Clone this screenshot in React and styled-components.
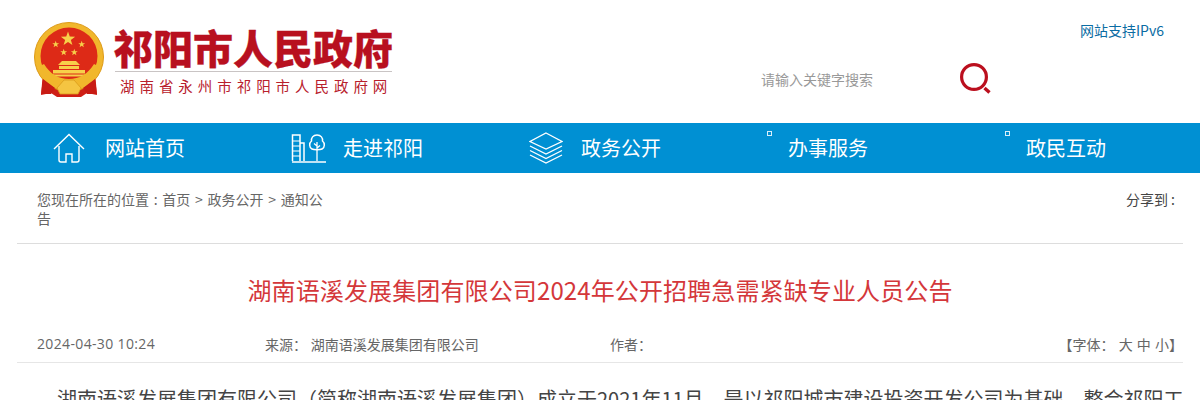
import React from "react";
import styled, { createGlobalStyle } from "styled-components";

const Global = createGlobalStyle`
  html, body { margin: 0; padding: 0; background: #fff; overflow: hidden; }
  body { font-family: "Noto Sans", "Noto Sans CJK SC", sans-serif; color: #666; }
`;
const CJK = `"Noto Sans CJK SC", sans-serif`;
const Page = styled.div`width: 1200px; height: 400px; overflow: hidden;`;
const Header = styled.header`height: 123px; display: flex; justify-content: space-between; padding: 0 36px 0 33px; box-sizing: border-box;`;
const Brand = styled.a`display: flex; align-items: flex-start; padding-top: 22px; gap: 9px; text-decoration: none;`;
const BrandText = styled.div`display: flex; flex-direction: column; padding-top: 1px;`;
const SiteName = styled.div`font: 900 40px/48px ${CJK}; color: #b8101f; width: 280px; margin-left: -1px; white-space: nowrap; -webkit-text-stroke: 0.3px #b8101f;`;
const SubName = styled.div`margin-left: 1px; padding: 3px 0 0 5px; width: 272px; border-top: 1px solid #c9c4c4; font: 400 14.5px/22px ${CJK}; letter-spacing: 4.95px; color: #b8202c; white-space: nowrap;`;
const Tools = styled.div`display: flex; flex-direction: column; align-items: flex-end; width: 404px;`;
const Ipv6 = styled.a`margin-top: 20px; font: 400 14px/20px ${CJK}; color: #0b6ca3;`;
const Search = styled.div`margin-top: 23px; width: 404px; display: flex; align-items: center; height: 32px;`;
const Placeholder = styled.span`font: 400 14px/20px ${CJK}; color: #999; width: 198px; padding-left: 1px;`;
const Nav = styled.nav`height: 50px; background: #0090d3; display: grid; grid-template-columns: repeat(5, 238px); padding-left: 53px;`;
const NavItem = styled.a`display: flex; align-items: center; color: #fff; font: 400 20px/50px ${CJK}; white-space: nowrap;`;
const NavIcon = styled.span`display: flex; width: ${p => p.$w}px; margin-right: ${p => p.$gap}px;`;
const Broken = styled.i`width: 3px; height: 3px; border: 1px solid #d7eefa; align-self: flex-start; margin: 8px 16px 0 0; flex: none;`;
const Crumbs = styled.div`display: flex; justify-content: space-between; align-items: flex-start; margin: 0 17px; padding: 17px 8px 15px 20px; height: 38px; border-bottom: 1px solid #ddd; font: 400 14px/19px ${CJK}; color: #666;`;
const Trail = styled.div`width: 295px; word-spacing: 1.6px;`;
const Share = styled.div`color: #444;`;
const Title = styled.h1`margin: 0; padding-top: 29px; height: 54px; font: 400 24px/34px ${CJK}; color: #d4373a; text-align: center; letter-spacing: 0.12px;`;
const Meta = styled.div`margin: 0 17px; padding: 0 0 2px 20px; height: 33px; display: flex; align-items: center; border-bottom: 1px solid #e6e6e6; font: 400 14px/20px ${CJK}; color: #666; white-space: nowrap;`;
const Date = styled.span`width: 228px; font-family: "Open Sans", sans-serif; letter-spacing: 0.35px;`;
const Source = styled.span`width: 345px; word-spacing: 0.5px;`;
const Author = styled.span`flex: 1;`;
const FontSize = styled.span`word-spacing: 1px;`;
const Body = styled.p`margin: 19px 15px 0 17px; text-indent: 2em; font: 400 20px/34px ${CJK}; color: #444;`;

const Star = ({ x, y, r }) => {
  const pts = [];
  for (let i = 0; i < 10; i++) {
    const a = -Math.PI / 2 + (i * Math.PI) / 5;
    const d = i % 2 ? r * 0.4 : r;
    pts.push(`${(x + d * Math.cos(a)).toFixed(2)},${(y + d * Math.sin(a)).toFixed(2)}`);
  }
  return <polygon points={pts.join(" ")} />;
};

const Emblem = () => (
  <svg width="72" height="76" viewBox="0 0 72 76">
    <path d="M10 50 L8 73 L18 71 L24 75 L48 75 L54 71 L64 73 L62 50 Z" fill="#cf1f16" />
    <circle cx="36" cy="35" r="34.5" fill="#f1b72c" stroke="#dd9a17" strokeWidth="1" />
    <circle cx="36" cy="34" r="28.5" fill="#dd2a17" />
    <g fill="#f7d04a">
      <Star x={35} y={17} r={7.5} />
      <Star x={22.7} y={22.3} r={3.6} />
      <Star x={48.7} y={22.3} r={3.6} />
      <Star x={30.7} y={30.3} r={3.6} />
      <Star x={41.3} y={30.3} r={3.6} />
      <path d="M29 39 H43 L47 43 H25 Z" />
      <rect x="26" y="44" width="20" height="3" />
      <rect x="20" y="48" width="32" height="3.5" />
      <rect x="16" y="52.5" width="40" height="2" />
    </g>
    <path d="M7 44 C13 58 24 63 36 63 C48 63 59 58 65 44 L61 42 C55 52 46 57 36 57 C26 57 17 52 11 42 Z" fill="#f1b72c" />
    <path d="M24 66 L31 58 H41 L48 66 L45 72 H27 Z" fill="#f5c542" stroke="#d99a1a" strokeWidth="0.8" />
    <path d="M10 57 L22 66 L18 72 L8 72 Z M62 57 L50 66 L54 72 L64 72 Z" fill="#c81b14" />
  </svg>
);
const HomeIcon = () => (
  <svg width="32" height="30" viewBox="0 0 32 30" fill="none" stroke="#fff" strokeWidth="1.4">
    <path d="M1 16 L16 1.5 L31 16" />
    <path d="M6 13 V27 Q6 29 8 29 H13 V21 H19 V29 H24 Q26 29 26 27 V13" />
  </svg>
);
const CityIcon = () => (
  <svg width="35" height="30" viewBox="0 0 35 30" fill="none" stroke="#fff" strokeWidth="1.5">
    <path d="M1.5 28 V2 H9 V28" />
    <path d="M13 28 V10 H9" />
    <path d="M1.5 8 H9 M1.5 13 H9 M1.5 18 H9 M1.5 23 H9" strokeWidth="1.2" />
    <path d="M26 2 C22 2 20 5 20.5 8 C18 10 18 14.5 21 16 C23 17 29 17 31 16 C34 14.5 34 10 31.5 8 C32 5 30 2 26 2 Z" />
    <path d="M26 9 V28 M26 13 L23 10.5 M26 15 L29 12.5" strokeWidth="1.3" />
    <path d="M1 29 H35" strokeWidth="1.6" />
  </svg>
);
const LayersIcon = () => (
  <svg width="34" height="32" viewBox="0 0 34 32" fill="none" stroke="#fff" strokeWidth="1.3">
    <path d="M17 1 L33 9.5 L17 17 L1 9.5 Z" />
    <path d="M1 14 L17 22 L33 14" />
    <path d="M1 18.5 L17 26.5 L33 18.5" />
    <path d="M1 23 L17 31 L33 23" />
  </svg>
);
const SearchIcon = () => (
  <svg width="32" height="32" viewBox="0 0 32 32" fill="none" stroke="#bb0f1e">
    <circle cx="15" cy="14" r="12.4" strokeWidth="3.2" />
    <path d="M25.5 25 L30.5 29.5" strokeWidth="3.4" />
  </svg>
);

export default function App() {
  return (
    <Page>
      <Global />
      <Header>
        <Brand>
          <Emblem />
          <BrandText>
            <SiteName>祁阳市人民政府</SiteName>
            <SubName>湖南省永州市祁阳市人民政府网</SubName>
          </BrandText>
        </Brand>
        <Tools>
          <Ipv6>网站支持IPv6</Ipv6>
          <Search>
            <Placeholder>请输入关键字搜索</Placeholder>
            <SearchIcon />
          </Search>
        </Tools>
      </Header>
      <Nav>
        <NavItem><NavIcon $w={32} $gap={20}><HomeIcon /></NavIcon>网站首页</NavItem>
        <NavItem><NavIcon $w={35} $gap={17}><CityIcon /></NavIcon>走进祁阳</NavItem>
        <NavItem><NavIcon $w={34} $gap={18}><LayersIcon /></NavIcon>政务公开</NavItem>
        <NavItem><Broken />办事服务</NavItem>
        <NavItem><Broken />政民互动</NavItem>
      </Nav>
      <Crumbs>
        <Trail>您现在所在的位置 : 首页 &gt; 政务公开 &gt; 通知公告</Trail>
        <Share>分享到 :</Share>
      </Crumbs>
      <Title>湖南语溪发展集团有限公司2024年公开招聘急需紧缺专业人员公告</Title>
      <Meta>
        <Date>2024-04-30 10:24</Date>
        <Source>来源： 湖南语溪发展集团有限公司</Source>
        <Author>作者：</Author>
        <FontSize>【字体： 大 中 小】</FontSize>
      </Meta>
      <Body>湖南语溪发展集团有限公司（简称湖南语溪发展集团）成立于2021年11月，是以祁阳城市建设投资开发公司为基础，整合祁阳工业园区投资开发有限公司等国有资产组建的国有独资企业。</Body>
    </Page>
  );
}
